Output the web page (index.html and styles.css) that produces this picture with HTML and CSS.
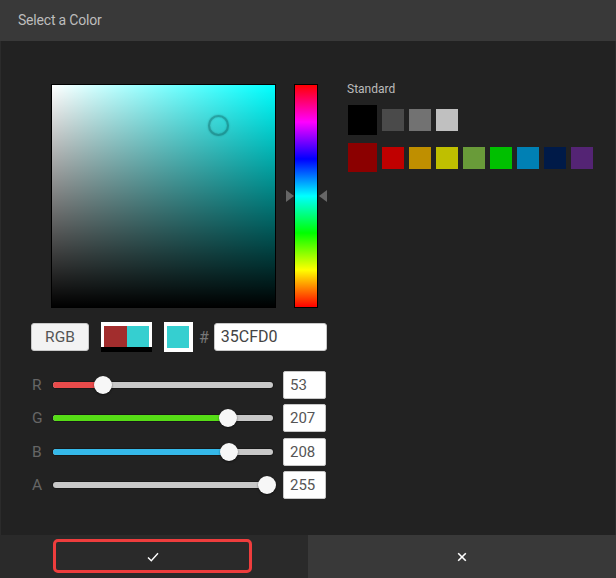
FILE: index.html
```html
<!DOCTYPE html>
<html>
<head>
<meta charset="utf-8">
<link rel="stylesheet" href="styles.css">
</head>
<body>
<div class="dialog">
  <div class="title">Select a Color</div>
  <div class="main">
    <div class="left">
      <div class="picker">
        <div class="sv"><div class="sv-cursor" style="left:166px;top:40px"></div></div>
        <div class="hue-wrap">
          <div class="hue"></div>
          <span class="arrow arrow-l" style="top:106px"></span>
          <span class="arrow arrow-r" style="top:106px"></span>
        </div>
      </div>
      <div class="controls">
        <div class="btn-mode">RGB</div>
        <div class="compare"><span class="old"></span><span class="new"></span></div>
        <div class="current"><span></span></div>
        <span class="hash">#</span>
        <div class="hex">35CFD0</div>
      </div>
      <div class="sliders">
        <div class="srow">
          <span class="slabel">R</span>
          <div class="track"><div class="fill fill-r" style="width:49.7px"></div><div class="thumb" style="left:49.7px"></div></div>
          <div class="val">53</div>
        </div>
        <div class="srow">
          <span class="slabel">G</span>
          <div class="track"><div class="fill fill-g" style="width:175px"></div><div class="thumb" style="left:175px"></div></div>
          <div class="val">207</div>
        </div>
        <div class="srow">
          <span class="slabel">B</span>
          <div class="track"><div class="fill fill-b" style="width:175.7px"></div><div class="thumb" style="left:175.7px"></div></div>
          <div class="val">208</div>
        </div>
        <div class="srow">
          <span class="slabel">A</span>
          <div class="track"><div class="thumb" style="left:213.7px"></div></div>
          <div class="val">255</div>
        </div>
      </div>
    </div>
    <div class="right">
      <div class="std-label">Standard</div>
      <div class="swatches">
        <span class="sw big" style="background:#000000"></span>
        <span class="sw" style="background:#4a4a4a"></span>
        <span class="sw" style="background:#727272"></span>
        <span class="sw" style="background:#c0c0c0"></span>
      </div>
      <div class="swatches row2">
        <span class="sw big" style="background:#8b0000"></span>
        <span class="sw" style="background:#c00000"></span>
        <span class="sw" style="background:#bf8f00"></span>
        <span class="sw" style="background:#bfbf00"></span>
        <span class="sw" style="background:#699b39"></span>
        <span class="sw" style="background:#00bf00"></span>
        <span class="sw" style="background:#0080b4"></span>
        <span class="sw" style="background:#001a48"></span>
        <span class="sw" style="background:#542474"></span>
      </div>
    </div>
  </div>
  <div class="footer">
    <div class="ok">
      <div class="ok-focus">
        <svg width="12" height="10" viewBox="0 0 12 10"><path d="M1 5.5 L4.3 8.8 L11 1.2" fill="none" stroke="#ffffff" stroke-width="1.4"/></svg>
      </div>
    </div>
    <div class="cancel">
      <svg width="10" height="10" viewBox="0 0 10 10"><path d="M1.2 1.2 L8.8 8.8 M8.8 1.2 L1.2 8.8" fill="none" stroke="#ffffff" stroke-width="1.6"/></svg>
    </div>
  </div>
</div>
</body>
</html>
```

FILE: styles.css
```css
* { box-sizing: border-box; }
html, body { margin: 0; padding: 0; }
body {
  background: #222222;
  font-family: Roboto, "Liberation Sans", sans-serif;
}
.dialog {
  width: 616px;
  height: 578px;
  display: flex;
  flex-direction: column;
}
.title {
  height: 41px;
  flex: none;
  background: #393939;
  color: #bdbdbd;
  font-size: 14px;
  line-height: 41px;
  padding-left: 18px;
  letter-spacing: -0.2px;
}
.main {
  flex: 1;
  display: flex;
  align-items: flex-start;
  background: #222222;
  border-left: 1px solid #2b2b2b;
  border-right: 1px solid #2b2b2b;
  padding: 40px 0 0 30px;
}
.left {
  width: 296px;
  padding-top: 3px;
  display: flex;
  flex-direction: column;
}
.picker {
  display: flex;
  padding-left: 20px;
  height: 224px;
}
.sv {
  position: relative;
  width: 225px;
  height: 224px;
  border: 1px solid #000;
  margin-right: 9px;
  background:
    linear-gradient(to bottom, rgba(0,0,0,0), #000),
    linear-gradient(to right, #fff, #00ffff);
}
.sv-cursor {
  position: absolute;
  width: 21px;
  height: 21px;
  margin: -10.5px 0 0 -10.5px;
  border-radius: 50%;
  border: 2px solid rgba(0, 60, 60, 0.35);
  box-shadow: 0 0 2px rgba(0,0,0,0.25), inset 0 0 2px rgba(0,0,0,0.2);
}
.hue-wrap {
  position: relative;
  width: 42px;
  height: 224px;
}
.hue {
  margin: 0 9px;
  width: 24px;
  height: 224px;
  border: 1px solid #000;
  background: linear-gradient(to bottom, #f00 0%, #f0f 16.67%, #00f 33.33%, #0ff 50%, #0f0 66.67%, #ff0 83.33%, #f00 100%);
}
.arrow {
  position: absolute;
  width: 0;
  height: 0;
  border-top: 6px solid transparent;
  border-bottom: 6px solid transparent;
}
.arrow-l { left: 1px; border-left: 8px solid #666; }
.arrow-r { left: 34px; border-right: 8px solid #666; }

.controls {
  display: flex;
  align-items: center;
  height: 30px;
  margin-top: 14px;
}
.btn-mode {
  width: 58px;
  height: 28px;
  background: #f3f3f3;
  border: 1px solid #c8c8c8;
  border-radius: 3px;
  color: #555;
  font-size: 15.5px;
  line-height: 26px;
  text-align: center;
  margin-right: 12px;
}
.compare {
  width: 51px;
  height: 30px;
  display: flex;
  background: #fff;
  padding: 4px 3px 0 3px;
  border-bottom: 5px solid #000;
  margin-right: 12px;
}
.compare .old { flex: 1; background: #a22d2d; }
.compare .new { flex: 1; background: #35cfd0; }
.current {
  width: 29px;
  height: 30px;
  background: #fff;
  padding: 4px 4px 4px 3px;
  margin-right: 6px;
}
.current span { display: block; width: 100%; height: 100%; background: #35cfd0; }
.hash {
  color: #777;
  font-size: 16px;
  margin-right: 5px;
}
.hex {
  width: 113px;
  height: 28px;
  background: #fff;
  border: 1px solid #c8c8c8;
  border-radius: 3px;
  color: #444;
  font-size: 16px;
  line-height: 26px;
  padding-left: 6px;
}

.sliders {
  margin-top: 19px;
  display: flex;
  flex-direction: column;
  gap: 5.33px;
}
.srow {
  display: flex;
  align-items: center;
  height: 28px;
}
.slabel {
  width: 22px;
  color: #666;
  font-size: 15.5px;
  padding-left: 1px;
}
.track {
  position: relative;
  width: 220px;
  height: 6px;
  border-radius: 3px;
  background: #c8c8c8;
  box-shadow: 0 0 0 1px rgba(0,0,0,0.25);
  margin-right: 10px;
}
.fill {
  position: absolute;
  left: 0;
  top: 0;
  height: 6px;
  border-radius: 3px 0 0 3px;
}
.fill-r { background: #e94b4b; }
.fill-g { background: #56dd16; }
.fill-b { background: #35b9ea; }
.thumb {
  position: absolute;
  top: 50%;
  width: 18px;
  height: 18px;
  margin: -9px 0 0 -9px;
  border-radius: 50%;
  background: #f7f7f7;
  box-shadow: 0 1px 2px rgba(0,0,0,0.5);
}
.val {
  width: 43px;
  height: 28px;
  background: #fff;
  border: 1px solid #c8c8c8;
  border-radius: 2px;
  color: #555;
  font-size: 15px;
  line-height: 26px;
  padding-left: 6px;
}

.right {
  margin-left: 20px;
  display: flex;
  flex-direction: column;
}
.std-label {
  color: #bbb;
  font-size: 12px;
  line-height: 16px;
}
.swatches {
  display: flex;
  align-items: center;
  gap: 5px;
  margin-top: 8px;
  padding-left: 1px;
}
.sw {
  display: block;
  width: 22px;
  height: 22px;
}
.sw.big {
  width: 29px;
  height: 30px;
}
.row2 .sw.big { height: 29px; }

.footer {
  flex: none;
  height: 43px;
  display: flex;
}
.ok {
  width: 308px;
  background: #2a2a2a;
  padding: 4px 0 5px 53px;
}
.ok-focus {
  width: 199px;
  height: 34px;
  border: 3px solid #ee3d3d;
  border-radius: 5px;
  display: flex;
  align-items: center;
  justify-content: center;
}
.ok-focus svg { margin-top: 1px; }
.cancel {
  flex: 1;
  background: #393939;
  display: flex;
  align-items: center;
  justify-content: center;
}
```
